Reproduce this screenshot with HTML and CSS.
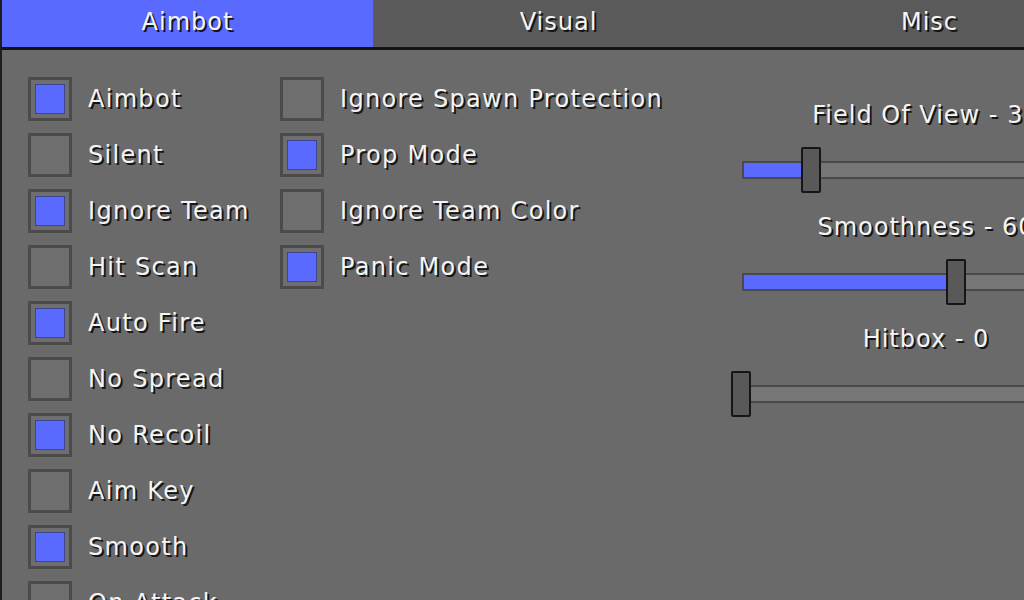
FILE: index.html
```html
<!DOCTYPE html>
<html lang="en">
<head>
  <meta charset="UTF-8" />
  <title>Aimbot Menu</title>
  <link rel="stylesheet" href="styles.css">
</head>
<body>
  <div class="window">
    <nav class="tabs">
      <div class="tab active">Aimbot</div>
      <div class="tab">Visual</div>
      <div class="tab">Misc</div>
    </nav>

    <section class="panel">
      <div class="col col-main">
        <label class="check"><span class="box on"></span>Aimbot</label>
        <label class="check"><span class="box"></span>Silent</label>
        <label class="check"><span class="box on"></span>Ignore Team</label>
        <label class="check"><span class="box"></span>Hit Scan</label>
        <label class="check"><span class="box on"></span>Auto Fire</label>
        <label class="check"><span class="box"></span>No Spread</label>
        <label class="check"><span class="box on"></span>No Recoil</label>
        <label class="check"><span class="box"></span>Aim Key</label>
        <label class="check"><span class="box on"></span>Smooth</label>
        <label class="check"><span class="box"></span>On Attack</label>
      </div>

      <div class="col col-extra">
        <label class="check"><span class="box"></span>Ignore Spawn Protection</label>
        <label class="check"><span class="box on"></span>Prop Mode</label>
        <label class="check"><span class="box"></span>Ignore Team Color</label>
        <label class="check"><span class="box on"></span>Panic Mode</label>
      </div>

      <div class="sliders">
        <div class="slider-group">
          <div class="slider-label">Field Of View - 30</div>
          <div class="slider">
            <div class="track">
              <div class="fill" style="width: 18.5%"></div>
              <div class="thumb" style="left: 18.5%"></div>
            </div>
          </div>
        </div>
        <div class="slider-group">
          <div class="slider-label">Smoothness - 60</div>
          <div class="slider">
            <div class="track">
              <div class="fill" style="width: 58.2%"></div>
              <div class="thumb" style="left: 58.2%"></div>
            </div>
          </div>
        </div>
        <div class="slider-group">
          <div class="slider-label">Hitbox - 0</div>
          <div class="slider">
            <div class="track">
              <div class="fill" style="width: 0%"></div>
              <div class="thumb" style="left: 0%"></div>
            </div>
          </div>
        </div>
      </div>
    </section>
  </div>
</body>
</html>
```

FILE: styles.css
```css
html, body {
  margin: 0;
  padding: 0;
  height: 600px;
  overflow: hidden;
  background: #6a6a6a;
  font-family: "DejaVu Sans", Verdana, sans-serif;
  color: #f4f4f4;
}

.window {
  width: 1116px;
  height: 600px;
  border-left: 2px solid #1e1e1e;
  background: #6a6a6a;
}

/* tab strip */
.tabs {
  display: grid;
  grid-template-columns: repeat(3, 371px);
  height: 47px;
  border-bottom: 3px solid #141414;
  background: #5a5a5a;
}
.tab {
  display: flex;
  align-items: center;
  justify-content: center;
  padding-bottom: 4px;
  font-size: 24px;
  letter-spacing: 1px;
  text-shadow: 2px 2px 0 #161616;
}
.tab.active {
  background: #5a6aff;
}

/* content */
.panel {
  display: flex;
  padding: 27px 0 0 26px;
}
.col {
  display: flex;
  flex-direction: column;
  gap: 12px;
}
.col-main {
  width: 252px;
}
.col-extra {
  width: 462px;
}

.check {
  display: flex;
  align-items: center;
  gap: 16px;
  height: 44px;
  font-size: 24px;
  letter-spacing: 1.3px;
  white-space: nowrap;
  text-shadow: 2px 2px 0 #161616;
}
.box {
  box-sizing: border-box;
  width: 44px;
  height: 44px;
  flex: none;
  border: 3px solid #4b4b4b;
  background: #6e6e6e;
  padding: 4px;
}
.box.on::after {
  content: "";
  display: block;
  width: 100%;
  height: 100%;
  box-sizing: border-box;
  border: 1px solid #3d4690;
  background: #5a6aff;
}

/* sliders */
.sliders {
  width: 368px;
  padding-top: 26px;
}
.slider-group + .slider-group {
  margin-top: 23px;
}
.slider-label {
  text-align: center;
  font-size: 24px;
  line-height: 24px;
  letter-spacing: 1px;
  white-space: nowrap;
  text-shadow: 2px 2px 0 #161616;
}
.slider {
  display: flex;
  align-items: center;
  height: 44px;
  margin-top: 21px;
}
.track {
  position: relative;
  box-sizing: border-box;
  width: 100%;
  height: 18px;
  border: 2px solid #4a4a4a;
  background: #777777;
}
.fill {
  height: 100%;
  background: #5a6aff;
}
.thumb {
  position: absolute;
  top: 50%;
  box-sizing: border-box;
  width: 20px;
  height: 46px;
  transform: translate(-50%, -50%);
  border: 2px solid #161616;
  border-radius: 2px;
  background: #595959;
}
.slider-group:last-child .thumb {
  margin-left: -3px;
}
```
